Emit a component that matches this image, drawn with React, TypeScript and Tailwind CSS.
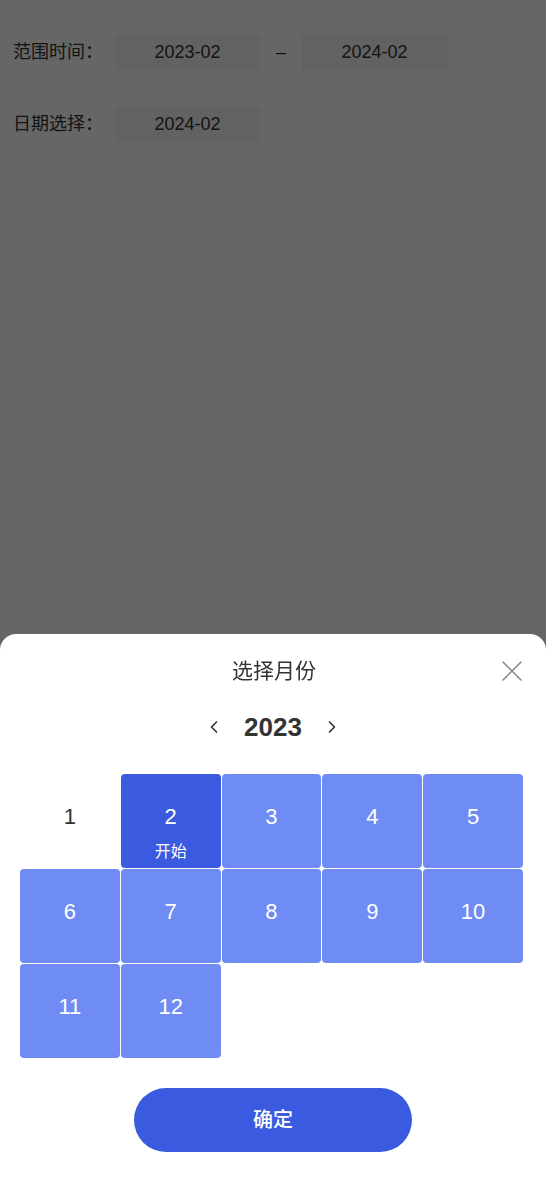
import { ChevronLeft, ChevronRight } from "lucide-react";

const font = "font-['Liberation_Sans','Noto_Sans_CJK_SC',sans-serif]";

function DateBox({ value }: { value: string }) {
  return (
    <div className="w-[145px] h-[35px] bg-[#f5f5f5] flex items-center justify-center text-[18px] text-[#333]">
      {value}
    </div>
  );
}

export default function App() {
  const start = 2;
  const months = Array.from({ length: 12 }, (_, i) => i + 1);

  return (
    <div className={`${font} relative min-h-[1182px] bg-white`}>
      {/* page content */}
      <div className="pt-[35px] pl-[13px]">
        <div className="flex items-center">
          <span className="text-[18px] text-[#333] w-[102px]">范围时间：</span>
          <DateBox value="2023-02" />
          <span className="mx-[16px] text-[18px] text-[#333]">–</span>
          <DateBox value="2024-02" />
        </div>
        <div className="flex items-center mt-[37px]">
          <span className="text-[18px] text-[#333] w-[102px]">日期选择：</span>
          <DateBox value="2024-02" />
        </div>
      </div>

      {/* mask */}
      <div className="fixed inset-0 bg-black/60" />

      {/* sheet */}
      <div className="fixed left-0 right-0 bottom-0 h-[548px] bg-white rounded-t-[16px]">
        <div className="relative h-[74px] flex items-center justify-center">
          <span className="text-[21px] text-[#333] pl-[2px]">选择月份</span>
          <svg
            className="absolute right-[24px] top-[27px]"
            width="20"
            height="20"
            viewBox="0 0 20 20"
            fill="none"
            stroke="#888"
            strokeWidth="1.6"
            strokeLinecap="round"
          >
            <path d="M1 1L19 19M19 1L1 19" />
          </svg>
        </div>
        <div className="h-[38px] flex items-center justify-center">
          <ChevronLeft className="w-[20px] h-[20px] text-[#333]" strokeWidth={2} />
          <span className="mx-[20px] text-[26px] font-bold text-[#333]">2023</span>
          <ChevronRight className="w-[20px] h-[20px] text-[#333]" strokeWidth={2} />
        </div>

        <div className="mt-[28px] pl-[20px] pr-[23px] grid grid-cols-5 gap-px">
          {months.map((m) => {
            const active = m === start;
            const inRange = m > start;
            return (
              <div
                key={m}
                className={`h-[94px] rounded-[4px] flex flex-col items-center pt-[30px] ${
                  active
                    ? "bg-[#3a5ae0] text-white"
                    : inRange
                    ? "bg-[#6e8cf3] text-white"
                    : "bg-white text-[#333]"
                }`}
              >
                <span className="text-[22px] leading-[26px]">{m}</span>
                {active && <span className="mt-[12px] text-[16px] leading-[20px]">开始</span>}
              </div>
            );
          })}
        </div>

        <div className="mt-[30px] flex justify-center">
          <button className="w-[278px] h-[64px] rounded-full bg-[#3a5ae0] text-white text-[20px] font-medium">
            确定
          </button>
        </div>
      </div>
    </div>
  );
}
